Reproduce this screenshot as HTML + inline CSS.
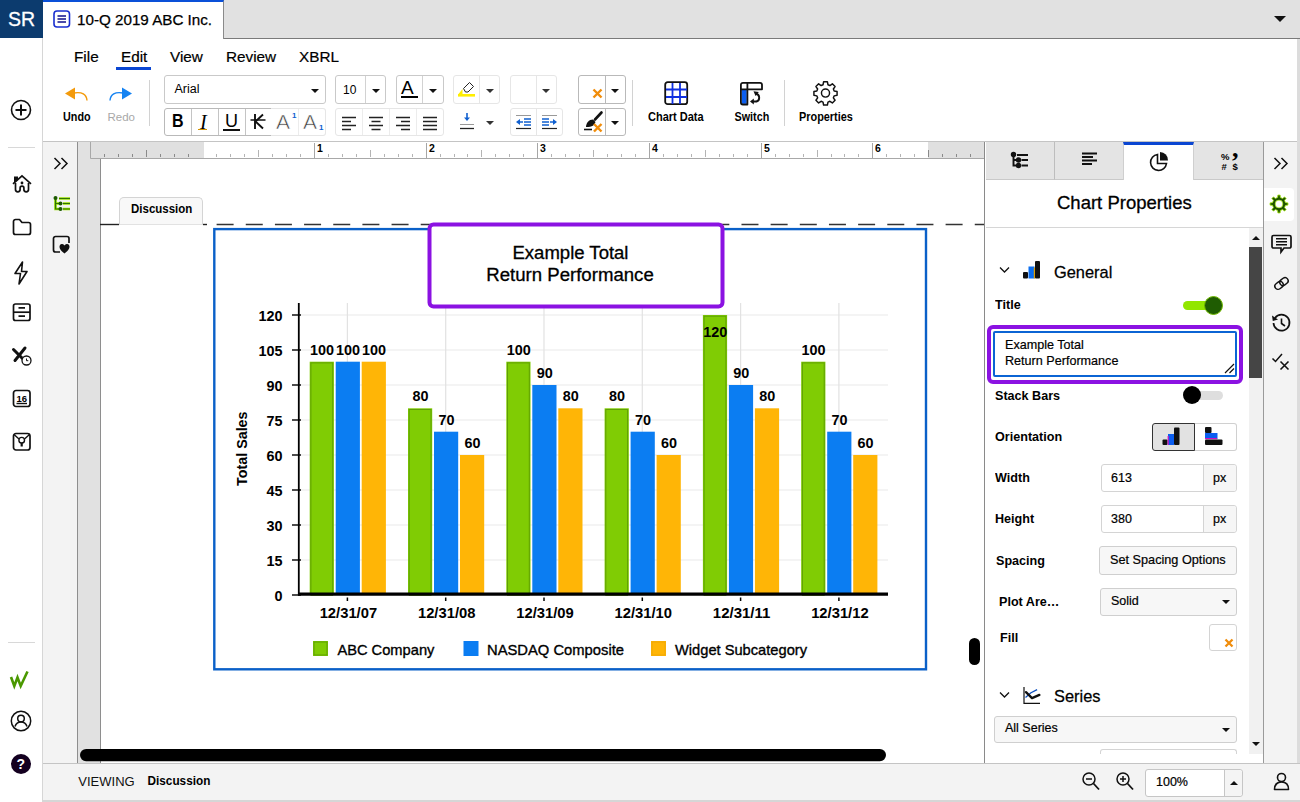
<!DOCTYPE html>
<html lang="en">
<head>
<meta charset="utf-8">
<title>10-Q 2019 ABC Inc.</title>
<style>
*{box-sizing:border-box;margin:0;padding:0}
html,body{width:1300px;height:802px;overflow:hidden;background:#fff}
body{font-family:"Liberation Sans",Arial,sans-serif;color:#000;position:relative;font-size:12px}
.abs{position:absolute}
.t{position:absolute;white-space:nowrap;line-height:1}
.b{font-weight:bold}
.sb{font-weight:normal;-webkit-text-stroke:0.45px currentColor}
svg{position:absolute;overflow:visible}
/* header */
#sr{left:0;top:0;width:43px;height:38.500px;background:#0c3b6e;color:#fff;font-size:19.500px;text-align:center;line-height:38px;-webkit-text-stroke:0.3px #fff}
#tabbar{left:43px;top:0;width:1257px;height:39px;background:#e1e1e1;border-bottom:1px solid #7a7a7a}
#tab{left:43px;top:0;width:181px;height:39px;background:#fff;border-top:2px solid #0a50d8;border-right:1px solid #8a8a8a}
#leftbar{left:0;top:38px;width:43px;height:764px;background:#fff;border-right:1px solid #d6d6d6}
#toolbar{left:43px;top:39px;width:1257px;height:103px;background:#fff;border-bottom:1px solid #c4c4c4}
.box{position:absolute;border:1px solid #c9c9c9;border-radius:3px;background:#fff}
.box.lt{border-color:#e6e6e6}
.box.dk{border-color:#b9b9b9}
.vs{position:absolute;width:1px;background:#d2d2d2}
.car{position:absolute;width:0;height:0;border-left:4px solid transparent;border-right:4px solid transparent;border-top:4px solid #111}
/* doc */
#panel2{left:43px;top:142px;width:34px;height:621px;background:#f3f3f3}
#gutter{left:77px;top:142px;width:23px;height:621px;background:#e1e1e1}
#page{left:100px;top:159px;width:885px;height:604px;background:#fff}
#ruler{left:90px;top:142px;width:895px;height:17px;background:#e0e0e0}
#rulerw{left:204px;top:142px;width:724px;height:16px;background:#fff}
/* right panel */
#rp{left:984px;top:142px;width:279px;height:621px;background:#fff;border-left:1px solid #8a8a8a}
#rbar{left:1263px;top:142px;width:37px;height:621px;background:#f3f3f3;border-left:1px solid #9a9a9a}
#redge{left:1297px;top:39px;width:3px;height:763px;background:#dcdcdc}
.rtab{position:absolute;top:142px;height:38px;background:#e4e4e4;border-right:1px solid #bdbdbd;border-bottom:1px solid #c9c9c9}
#status{left:43px;top:763px;width:1257px;height:39px;background:#f3f3f3;border-top:1px solid #c4c4c4;border-bottom:2px solid #d6d6d6}
.lbl{position:absolute;font-weight:bold;font-size:12.600px;white-space:nowrap;line-height:1;transform:scaleY(1.08);transform-origin:50% 55%}
</style>
</head>
<body>
<!-- HEADER -->
<div class="abs" id="tabbar"></div>
<div class="abs" id="sr">SR</div>
<div class="abs" id="tab"></div>
<div class="abs" id="leftbar"></div>
<div class="abs" id="toolbar"></div>
<!-- tab -->
<svg style="left:53px;top:10px" width="18" height="18" viewBox="0 0 18 18"><rect x="1" y="1" width="15.5" height="16" rx="3" fill="#fff" stroke="#1a2fd0" stroke-width="1.6"/><path d="M4.5 6h8.5M4.5 9h8.5M4.5 12h8.5" stroke="#10108c" stroke-width="1.5"/></svg>
<div class="t" style="left:77px;top:12px;font-size:15.200px;-webkit-text-stroke:0.25px #000">10-Q 2019 ABC Inc.</div>
<div class="car" style="left:1274px;top:15.500px;border-left-width:6px;border-right-width:6px;border-top-width:6px"></div>
<!-- menu -->
<div class="t" style="left:74px;top:48.500px;font-size:15.300px;-webkit-text-stroke:0.2px #000">File</div>
<div class="t" style="left:121px;top:48.500px;font-size:15.300px;-webkit-text-stroke:0.2px #000">Edit</div>
<div class="abs" style="left:116px;top:67px;width:35px;height:3px;background:#0a46d2"></div>
<div class="t" style="left:170px;top:48.500px;font-size:15.300px;-webkit-text-stroke:0.2px #000">View</div>
<div class="t" style="left:226px;top:48.500px;font-size:15.300px;-webkit-text-stroke:0.2px #000">Review</div>
<div class="t" style="left:299px;top:48.500px;font-size:15.300px;-webkit-text-stroke:0.2px #000">XBRL</div>
<!-- undo / redo -->
<svg style="left:64px;top:85px" width="26" height="18" viewBox="0 0 26 18"><path d="M1 8.500L11 2.500v12z" fill="#f39a0b"/><path d="M10 8c8-1.500 12.500 1.500 13 7.500" fill="none" stroke="#f39a0b" stroke-width="1.400"/></svg>
<svg style="left:108px;top:85px" width="26" height="18" viewBox="0 0 26 18"><path d="M24 8.500L14 2.500v12z" fill="#1583f2"/><path d="M15 8c-8-1.500-12.500 1.500-13 7.500" fill="none" stroke="#1583f2" stroke-width="1.400"/></svg>
<div class="t b" style="left:63px;top:112.200px;font-size:10.800px;transform:scaleY(1.1)">Undo</div>
<div class="t" style="left:107.500px;top:111.800px;font-size:11.500px;color:#a8a8a8">Redo</div>
<div class="vs" style="left:149px;top:80px;height:46px"></div>
<!-- font row 1 -->
<div class="box" style="left:164px;top:75px;width:162px;height:29px"></div>
<div class="t" style="left:174.500px;top:83px;font-size:12.500px">Arial</div>
<div class="car" style="left:311px;top:89px"></div>
<div class="box" style="left:335px;top:75px;width:51px;height:29px"></div>
<div class="vs" style="left:365px;top:76px;height:27px"></div>
<div class="t" style="left:343px;top:84px;font-size:12px">10</div>
<div class="car" style="left:372px;top:89px"></div>
<div class="box" style="left:396px;top:75px;width:48px;height:29px"></div>
<div class="vs" style="left:422px;top:76px;height:27px"></div>
<div class="t" style="left:401px;top:78px;font-size:19px">A</div>
<div class="abs" style="left:401px;top:96px;width:17px;height:2px;background:#000"></div>
<div class="car" style="left:429px;top:89px"></div>
<!-- highlight -->
<div class="box lt" style="left:453px;top:75px;width:47px;height:29px"></div>
<div class="vs" style="left:479px;top:76px;height:27px;background:#e6e6e6"></div>
<svg style="left:457px;top:79px" width="20" height="20" viewBox="0 0 20 20"><rect x="1" y="15" width="17" height="2.6" fill="#ffee00"/><path d="M1.5 15l4-5v5z" fill="#ffee00"/><path d="M6.5 9.5l6-6 4 4-5.5 5.5h-2.5z" fill="#fff" stroke="#222" stroke-width="1"/></svg>
<div class="car" style="left:486px;top:89px;border-top-color:#333"></div>
<div class="box lt" style="left:510px;top:75px;width:47px;height:29px"></div>
<div class="vs" style="left:536px;top:76px;height:27px;background:#e6e6e6"></div>
<div class="car" style="left:542px;top:89px;border-top-color:#333"></div>
<div class="box dk" style="left:578px;top:75px;width:48px;height:29px"></div>
<div class="vs" style="left:605px;top:76px;height:27px;background:#b9b9b9"></div>
<svg style="left:592px;top:88px" width="11" height="11" viewBox="0 0 11 11"><path d="M1.5 1.5l8 8M9.500 1.5l-8 8" stroke="#f08c0a" stroke-width="2.4"/></svg>
<div class="car" style="left:611px;top:89px"></div>
<!-- row 2 : B I U K A A -->
<div class="box dk" style="left:164px;top:108px;width:108px;height:28px;border-radius:3px 0 0 3px"></div>
<div class="box lt" style="left:271px;top:108px;width:55px;height:28px;border-radius:0 3px 3px 0;border-left:none"></div>
<div class="vs" style="left:191px;top:109px;height:26px;background:#c4c4c4"></div>
<div class="vs" style="left:218px;top:109px;height:26px;background:#c4c4c4"></div>
<div class="vs" style="left:245px;top:109px;height:26px;background:#c4c4c4"></div>
<div class="vs" style="left:298px;top:109px;height:26px;background:#ececec"></div>
<div class="t b" style="left:172px;top:113px;font-size:16px;transform:scaleY(1.2)">B</div>
<div class="t" style="left:200px;top:112px;font-size:20px;font-style:italic;font-family:'Liberation Serif',serif">I</div>
<div class="abs" style="left:198px;top:129px;width:9px;height:1px;background:#d09000"></div>
<div class="t" style="left:225px;top:112px;font-size:18px">U</div>
<div class="abs" style="left:223px;top:129px;width:17px;height:1.5px;background:#111"></div>
<svg style="left:249px;top:112px" width="18" height="18" viewBox="0 0 18 18"><path d="M6 2v15M14 2.500L6.500 9.500 14 16.500" fill="none" stroke="#111" stroke-width="1.9"/><path d="M1.500 8h15" stroke="#111" stroke-width="1.5"/></svg>
<div class="t" style="left:276px;top:111px;font-size:21px;color:#444;font-weight:100;-webkit-text-stroke:0.6px #fff">A</div>
<div class="t" style="left:292px;top:112px;font-size:8px;color:#1060d0;font-weight:bold">1</div>
<div class="t" style="left:303px;top:111px;font-size:21px;color:#444;-webkit-text-stroke:0.6px #fff">A</div>
<div class="t" style="left:319px;top:124px;font-size:8px;color:#1060d0;font-weight:bold">1</div>
<!-- align group -->
<div class="box lt" style="left:335px;top:108px;width:109px;height:28px"></div>
<div class="vs" style="left:362px;top:109px;height:26px;background:#ececec"></div>
<div class="vs" style="left:389px;top:109px;height:26px;background:#ececec"></div>
<div class="vs" style="left:416px;top:109px;height:26px;background:#ececec"></div>
<svg style="left:335px;top:108px" width="109" height="28" viewBox="0 0 109 28">
<g stroke="#222" stroke-width="1.3" fill="none">
<path d="M7 9.5h14M7 13.500h9M7 17.500h14M7 21.500h9"/>
<path d="M34 9.5h14M36.500 13.500h9M34 17.500h14M36.500 21.500h9"/>
<path d="M61 9.5h14M66 13.500h9M61 17.500h14M66 21.500h9"/>
<path d="M88 9.5h14M88 13.500h14M88 17.500h14M88 21.500h14"/>
</g></svg>
<!-- line spacing -->
<svg style="left:458px;top:112px" width="18" height="20" viewBox="0 0 18 20"><path d="M9 1v5" stroke="#1060d0" stroke-width="1.6"/><path d="M6 5.500h6L9 9z" fill="#1060d0"/><path d="M2 12.500h14" stroke="#999" stroke-width="1"/><path d="M2 16.500h14" stroke="#222" stroke-width="1.3"/></svg>
<div class="car" style="left:486px;top:121px;border-top-color:#333"></div>
<!-- indent -->
<div class="box lt" style="left:510px;top:108px;width:53px;height:28px"></div>
<div class="vs" style="left:536px;top:109px;height:26px;background:#e6e6e6"></div>
<svg style="left:514px;top:112px" width="20" height="20" viewBox="0 0 20 20"><path d="M2 3.500h15" stroke="#999" stroke-width="1"/><path d="M2 16.500h15" stroke="#222" stroke-width="1.2"/><path d="M10 7h7M10 10h7M10 13h7" stroke="#1060d0" stroke-width="1.5"/><path d="M2 10l4-3v6z" fill="#1060d0"/><path d="M5 10h4" stroke="#1060d0" stroke-width="1.5"/></svg>
<svg style="left:540px;top:112px" width="20" height="20" viewBox="0 0 20 20"><path d="M2 3.500h15" stroke="#999" stroke-width="1"/><path d="M2 16.500h15" stroke="#222" stroke-width="1.2"/><path d="M2 7h7M2 10h7M2 13h7" stroke="#1060d0" stroke-width="1.5"/><path d="M17 10l-4-3v6z" fill="#1060d0"/><path d="M10 10h4" stroke="#1060d0" stroke-width="1.5"/></svg>
<!-- brush x -->
<div class="box dk" style="left:578px;top:108px;width:48px;height:28px"></div>
<div class="vs" style="left:605px;top:109px;height:26px;background:#b9b9b9"></div>
<svg style="left:582px;top:110px" width="24" height="24" viewBox="0 0 24 24"><path d="M13 9.500L19.500 2.500" stroke="#111" stroke-width="2.6" stroke-linecap="round"/><path d="M4 17c0-4 3-7.500 7-7.500l2.500 2.500c-1 3-3 5-9.500 5z" fill="#111"/><path d="M2 19.500h8" stroke="#111" stroke-width="1.6"/><path d="M12 14l7.500 7.500M19.500 14L12 21.500" stroke="#f08c0a" stroke-width="2.4"/></svg>
<div class="car" style="left:611px;top:121px"></div>
<div class="vs" style="left:632px;top:80px;height:46px"></div>
<!-- chart data -->
<svg style="left:664px;top:81px" width="25" height="25" viewBox="0 0 25 25"><rect x="1.200" y="1.200" width="22" height="22" rx="2.500" fill="#fff" stroke="#111" stroke-width="1.8"/><path d="M8.500 2v21M16 2v21M2 8.500h21M2 16h21" stroke="#1030e0" stroke-width="1.8"/></svg>
<div class="t b" style="left:648px;top:112px;font-size:11px;transform:scaleY(1.1)">Chart Data</div>
<!-- switch -->
<svg style="left:739px;top:81px" width="26" height="25" viewBox="0 0 26 25"><rect x="2.700" y="8.800" width="5" height="14" fill="#0b5ef0"/><path d="M1.900 8.300V3.800a2 2 0 0 1 2-2H21a2 2 0 0 1 2 2v4.500H1.900V21.500a2 2 0 0 0 2 2H8.400V1.800" fill="none" stroke="#111" stroke-width="1.800" stroke-linejoin="round"/><path d="M17 12.800a4 4 0 0 1 .5 7.700h-3.500" fill="none" stroke="#111" stroke-width="1.900"/><path d="M11 20.500l3.800-2.900v5.800z" fill="#111"/><path d="M14.500 10.300l5.300 .8-3.200 3.900z" fill="#111"/></svg>
<div class="t b" style="left:734.500px;top:112px;font-size:10.800px;transform:scaleY(1.12)">Switch</div>
<div class="vs" style="left:784px;top:80px;height:46px"></div>
<!-- properties gear -->
<svg style="left:811.500px;top:79px" width="27" height="27" viewBox="0 0 24 24"><path d="M10.300 2.500h3.400l.5 2.600 1.700.7 2.200-1.500 2.400 2.400-1.500 2.200.7 1.700 2.600.5v3.400l-2.600.5-.7 1.700 1.500 2.200-2.400 2.400-2.200-1.500-1.700.7-.5 2.600h-3.400l-.5-2.600-1.700-.7-2.200 1.500-2.400-2.400 1.500-2.200-.7-1.700-2.600-.5v-3.400l2.600-.5.7-1.700-1.500-2.200 2.400-2.400 2.200 1.500 1.700-.7z" fill="none" stroke="#111" stroke-width="1.300" stroke-linejoin="round"/><circle cx="12" cy="12.500" r="3.600" fill="none" stroke="#111" stroke-width="1.300"/></svg>
<div class="t b" style="left:799px;top:112px;font-size:10.900px;transform:scaleY(1.1)">Properties</div>


<!-- DOC -->
<div class="abs" id="panel2"></div>
<div class="abs" id="gutter"></div>
<div class="abs" id="page"></div>
<div class="abs" id="ruler"></div>
<div class="abs" id="rulerw"></div>
<svg style="left:0;top:0" width="1300" height="802" viewBox="0 0 1300 802">
<path d="M104.5 157 v-3M118.5 157 v-3M132.5 157 v-3M146.5 157 v-7M160.5 157 v-3M174.5 157 v-3M188.5 157 v-3M928.5 157 v-7M942.5 157 v-3M956.5 157 v-3M970.5 157 v-3" stroke="#8a8a8a" stroke-width="1" fill="none"/>
<path d="M216.5 157 v-3M230.5 157 v-3M244.5 157 v-3M258.5 157 v-7M272.5 157 v-3M286.5 157 v-3M300.5 157 v-3M328.5 157 v-3M342.5 157 v-3M356.5 157 v-3M370.5 157 v-7M384.5 157 v-3M398.5 157 v-3M412.5 157 v-3M440.5 157 v-3M454.5 157 v-3M467.5 157 v-3M481.5 157 v-7M495.5 157 v-3M509.5 157 v-3M523.5 157 v-3M551.5 157 v-3M565.5 157 v-3M579.5 157 v-3M593.5 157 v-7M607.5 157 v-3M621.5 157 v-3M635.5 157 v-3M663.5 157 v-3M677.5 157 v-3M691.5 157 v-3M705.5 157 v-7M719.5 157 v-3M733.5 157 v-3M747.5 157 v-3M775.5 157 v-3M789.5 157 v-3M803.5 157 v-3M817.5 157 v-7M831.5 157 v-3M844.5 157 v-3M858.5 157 v-3M886.5 157 v-3M900.5 157 v-3M914.5 157 v-3" stroke="#b4b4b4" stroke-width="1" fill="none"/>
<path d="M314.5 143v15" stroke="#a6a6a6" stroke-width="1"/>
<text x="317.0" y="151.600" font-size="10.500" font-weight="bold" font-family="Liberation Sans,sans-serif">1</text>
<path d="M426.5 143v15" stroke="#a6a6a6" stroke-width="1"/>
<text x="429.0" y="151.600" font-size="10.500" font-weight="bold" font-family="Liberation Sans,sans-serif">2</text>
<path d="M537.5 143v15" stroke="#a6a6a6" stroke-width="1"/>
<text x="540.0" y="151.600" font-size="10.500" font-weight="bold" font-family="Liberation Sans,sans-serif">3</text>
<path d="M649.5 143v15" stroke="#a6a6a6" stroke-width="1"/>
<text x="652.0" y="151.600" font-size="10.500" font-weight="bold" font-family="Liberation Sans,sans-serif">4</text>
<path d="M761.5 143v15" stroke="#a6a6a6" stroke-width="1"/>
<text x="764.0" y="151.600" font-size="10.500" font-weight="bold" font-family="Liberation Sans,sans-serif">5</text>
<path d="M872.5 143v15" stroke="#a6a6a6" stroke-width="1"/>
<text x="875.0" y="151.600" font-size="10.500" font-weight="bold" font-family="Liberation Sans,sans-serif">6</text>
<path d="M90.5 142v16.500h894" stroke="#a8a8a8" stroke-width="1" fill="none"/>
<path d="M77.500 142V763M100.500 159V763" stroke="#8e8e8e" stroke-width="1" fill="none"/>
<path d="M100 224.500h19" stroke="#222" stroke-width="1.4"/>
<path d="M203 224.500h4" stroke="#222" stroke-width="1.4"/>
<path d="M216.600 224.500H985" stroke="#333" stroke-width="1.300" stroke-dasharray="17 12.16" fill="none"/>
<rect x="214.300" y="229.100" width="711.700" height="440.200" fill="#fff" stroke="#0a60c8" stroke-width="2.400"/>
<path d="M298.8 560.0H888" stroke="#eaeaea" stroke-width="1.2"/>
<path d="M298.8 525.0H888" stroke="#eaeaea" stroke-width="1.2"/>
<path d="M298.8 490.0H888" stroke="#eaeaea" stroke-width="1.2"/>
<path d="M298.8 455.0H888" stroke="#eaeaea" stroke-width="1.2"/>
<path d="M298.8 420.0H888" stroke="#eaeaea" stroke-width="1.2"/>
<path d="M298.8 385.0H888" stroke="#eaeaea" stroke-width="1.2"/>
<path d="M298.8 350.0H888" stroke="#eaeaea" stroke-width="1.2"/>
<path d="M298.8 315.0H888" stroke="#eaeaea" stroke-width="1.2"/>
<path d="M347.4 303V593" stroke="#e2e2e2" stroke-width="1.2"/>
<path d="M445.7 303V593" stroke="#e2e2e2" stroke-width="1.2"/>
<path d="M544.0 303V593" stroke="#e2e2e2" stroke-width="1.2"/>
<path d="M642.3 303V593" stroke="#e2e2e2" stroke-width="1.2"/>
<path d="M740.6 303V593" stroke="#e2e2e2" stroke-width="1.2"/>
<path d="M838.9 303V593" stroke="#e2e2e2" stroke-width="1.2"/>
<rect x="309.7" y="361.7" width="24.2" height="233.3" fill="#80cc04"/>
<rect x="310.9" y="362.9" width="21.8" height="232.3" fill="none" stroke="#5fa004" stroke-width="1"/>
<rect x="335.7" y="361.7" width="24.2" height="233.3" fill="#0b7df2"/>
<rect x="361.7" y="361.7" width="24.2" height="233.3" fill="#ffb506"/>
<rect x="408.0" y="408.3" width="24.2" height="186.7" fill="#80cc04"/>
<rect x="409.2" y="409.5" width="21.8" height="185.7" fill="none" stroke="#5fa004" stroke-width="1"/>
<rect x="434.0" y="431.7" width="24.2" height="163.3" fill="#0b7df2"/>
<rect x="460.0" y="455.0" width="24.2" height="140.0" fill="#ffb506"/>
<rect x="506.3" y="361.7" width="24.2" height="233.3" fill="#80cc04"/>
<rect x="507.5" y="362.9" width="21.8" height="232.3" fill="none" stroke="#5fa004" stroke-width="1"/>
<rect x="532.3" y="385.0" width="24.2" height="210.0" fill="#0b7df2"/>
<rect x="558.3" y="408.3" width="24.2" height="186.7" fill="#ffb506"/>
<rect x="604.6" y="408.3" width="24.2" height="186.7" fill="#80cc04"/>
<rect x="605.8" y="409.5" width="21.8" height="185.7" fill="none" stroke="#5fa004" stroke-width="1"/>
<rect x="630.6" y="431.7" width="24.2" height="163.3" fill="#0b7df2"/>
<rect x="656.6" y="455.0" width="24.2" height="140.0" fill="#ffb506"/>
<rect x="702.9" y="315.0" width="24.2" height="280.0" fill="#80cc04"/>
<rect x="704.1" y="316.2" width="21.8" height="279.0" fill="none" stroke="#5fa004" stroke-width="1"/>
<rect x="728.9" y="385.0" width="24.2" height="210.0" fill="#0b7df2"/>
<rect x="754.9" y="408.3" width="24.2" height="186.7" fill="#ffb506"/>
<rect x="801.2" y="361.7" width="24.2" height="233.3" fill="#80cc04"/>
<rect x="802.4" y="362.9" width="21.8" height="232.3" fill="none" stroke="#5fa004" stroke-width="1"/>
<rect x="827.2" y="431.7" width="24.2" height="163.3" fill="#0b7df2"/>
<rect x="853.2" y="455.0" width="24.2" height="140.0" fill="#ffb506"/>
<text x="322.1" y="354.7" text-anchor="middle" font-size="15" font-weight="bold" font-family="Liberation Sans,sans-serif" textLength="24" lengthAdjust="spacingAndGlyphs">100</text>
<text x="348.1" y="354.7" text-anchor="middle" font-size="15" font-weight="bold" font-family="Liberation Sans,sans-serif" textLength="24" lengthAdjust="spacingAndGlyphs">100</text>
<text x="374.1" y="354.7" text-anchor="middle" font-size="15" font-weight="bold" font-family="Liberation Sans,sans-serif" textLength="24" lengthAdjust="spacingAndGlyphs">100</text>
<text x="420.4" y="401.3" text-anchor="middle" font-size="15" font-weight="bold" font-family="Liberation Sans,sans-serif" textLength="16" lengthAdjust="spacingAndGlyphs">80</text>
<text x="446.4" y="424.7" text-anchor="middle" font-size="15" font-weight="bold" font-family="Liberation Sans,sans-serif" textLength="16" lengthAdjust="spacingAndGlyphs">70</text>
<text x="472.4" y="448.0" text-anchor="middle" font-size="15" font-weight="bold" font-family="Liberation Sans,sans-serif" textLength="16" lengthAdjust="spacingAndGlyphs">60</text>
<text x="518.7" y="354.7" text-anchor="middle" font-size="15" font-weight="bold" font-family="Liberation Sans,sans-serif" textLength="24" lengthAdjust="spacingAndGlyphs">100</text>
<text x="544.7" y="378.0" text-anchor="middle" font-size="15" font-weight="bold" font-family="Liberation Sans,sans-serif" textLength="16" lengthAdjust="spacingAndGlyphs">90</text>
<text x="570.7" y="401.3" text-anchor="middle" font-size="15" font-weight="bold" font-family="Liberation Sans,sans-serif" textLength="16" lengthAdjust="spacingAndGlyphs">80</text>
<text x="617.0" y="401.3" text-anchor="middle" font-size="15" font-weight="bold" font-family="Liberation Sans,sans-serif" textLength="16" lengthAdjust="spacingAndGlyphs">80</text>
<text x="643.0" y="424.7" text-anchor="middle" font-size="15" font-weight="bold" font-family="Liberation Sans,sans-serif" textLength="16" lengthAdjust="spacingAndGlyphs">70</text>
<text x="669.0" y="448.0" text-anchor="middle" font-size="15" font-weight="bold" font-family="Liberation Sans,sans-serif" textLength="16" lengthAdjust="spacingAndGlyphs">60</text>
<text x="715.3" y="337.0" text-anchor="middle" font-size="15" font-weight="bold" font-family="Liberation Sans,sans-serif" textLength="24" lengthAdjust="spacingAndGlyphs">120</text>
<text x="741.3" y="378.0" text-anchor="middle" font-size="15" font-weight="bold" font-family="Liberation Sans,sans-serif" textLength="16" lengthAdjust="spacingAndGlyphs">90</text>
<text x="767.3" y="401.3" text-anchor="middle" font-size="15" font-weight="bold" font-family="Liberation Sans,sans-serif" textLength="16" lengthAdjust="spacingAndGlyphs">80</text>
<text x="813.6" y="354.7" text-anchor="middle" font-size="15" font-weight="bold" font-family="Liberation Sans,sans-serif" textLength="24" lengthAdjust="spacingAndGlyphs">100</text>
<text x="839.6" y="424.7" text-anchor="middle" font-size="15" font-weight="bold" font-family="Liberation Sans,sans-serif" textLength="16" lengthAdjust="spacingAndGlyphs">70</text>
<text x="865.6" y="448.0" text-anchor="middle" font-size="15" font-weight="bold" font-family="Liberation Sans,sans-serif" textLength="16" lengthAdjust="spacingAndGlyphs">60</text>
<path d="M298.8 303V595.500" stroke="#000" stroke-width="1.8"/>
<path d="M298 594.200H888" stroke="#000" stroke-width="3.2"/>
<path d="M292 595.0h9" stroke="#000" stroke-width="1.4"/>
<text x="282.500" y="600.8" text-anchor="end" font-size="15" font-weight="bold" font-family="Liberation Sans,sans-serif" textLength="8" lengthAdjust="spacingAndGlyphs">0</text>
<path d="M292 560.0h9" stroke="#000" stroke-width="1.4"/>
<text x="282.500" y="565.8" text-anchor="end" font-size="15" font-weight="bold" font-family="Liberation Sans,sans-serif" textLength="16" lengthAdjust="spacingAndGlyphs">15</text>
<path d="M292 525.0h9" stroke="#000" stroke-width="1.4"/>
<text x="282.500" y="530.8" text-anchor="end" font-size="15" font-weight="bold" font-family="Liberation Sans,sans-serif" textLength="16" lengthAdjust="spacingAndGlyphs">30</text>
<path d="M292 490.0h9" stroke="#000" stroke-width="1.4"/>
<text x="282.500" y="495.8" text-anchor="end" font-size="15" font-weight="bold" font-family="Liberation Sans,sans-serif" textLength="16" lengthAdjust="spacingAndGlyphs">45</text>
<path d="M292 455.0h9" stroke="#000" stroke-width="1.4"/>
<text x="282.500" y="460.8" text-anchor="end" font-size="15" font-weight="bold" font-family="Liberation Sans,sans-serif" textLength="16" lengthAdjust="spacingAndGlyphs">60</text>
<path d="M292 420.0h9" stroke="#000" stroke-width="1.4"/>
<text x="282.500" y="425.8" text-anchor="end" font-size="15" font-weight="bold" font-family="Liberation Sans,sans-serif" textLength="16" lengthAdjust="spacingAndGlyphs">75</text>
<path d="M292 385.0h9" stroke="#000" stroke-width="1.4"/>
<text x="282.500" y="390.8" text-anchor="end" font-size="15" font-weight="bold" font-family="Liberation Sans,sans-serif" textLength="16" lengthAdjust="spacingAndGlyphs">90</text>
<path d="M292 350.0h9" stroke="#000" stroke-width="1.4"/>
<text x="282.500" y="355.8" text-anchor="end" font-size="15" font-weight="bold" font-family="Liberation Sans,sans-serif" textLength="24" lengthAdjust="spacingAndGlyphs">105</text>
<path d="M292 315.0h9" stroke="#000" stroke-width="1.4"/>
<text x="282.500" y="320.8" text-anchor="end" font-size="15" font-weight="bold" font-family="Liberation Sans,sans-serif" textLength="24" lengthAdjust="spacingAndGlyphs">120</text>
<path d="M347.4 597.500v3.500" stroke="#000" stroke-width="1.5"/>
<text x="348.4" y="617.600" text-anchor="middle" font-size="14.800" font-weight="bold" font-family="Liberation Sans,sans-serif" textLength="57.500" lengthAdjust="spacingAndGlyphs">12/31/07</text>
<path d="M445.7 597.500v3.500" stroke="#000" stroke-width="1.5"/>
<text x="446.7" y="617.600" text-anchor="middle" font-size="14.800" font-weight="bold" font-family="Liberation Sans,sans-serif" textLength="57.500" lengthAdjust="spacingAndGlyphs">12/31/08</text>
<path d="M544.0 597.500v3.500" stroke="#000" stroke-width="1.5"/>
<text x="545.0" y="617.600" text-anchor="middle" font-size="14.800" font-weight="bold" font-family="Liberation Sans,sans-serif" textLength="57.500" lengthAdjust="spacingAndGlyphs">12/31/09</text>
<path d="M642.3 597.500v3.500" stroke="#000" stroke-width="1.5"/>
<text x="643.3" y="617.600" text-anchor="middle" font-size="14.800" font-weight="bold" font-family="Liberation Sans,sans-serif" textLength="57.500" lengthAdjust="spacingAndGlyphs">12/31/10</text>
<path d="M740.6 597.500v3.500" stroke="#000" stroke-width="1.5"/>
<text x="741.6" y="617.600" text-anchor="middle" font-size="14.800" font-weight="bold" font-family="Liberation Sans,sans-serif" textLength="57.500" lengthAdjust="spacingAndGlyphs">12/31/11</text>
<path d="M838.9 597.500v3.500" stroke="#000" stroke-width="1.5"/>
<text x="839.9" y="617.600" text-anchor="middle" font-size="14.800" font-weight="bold" font-family="Liberation Sans,sans-serif" textLength="57.500" lengthAdjust="spacingAndGlyphs">12/31/12</text>
<text transform="translate(246.800 448.700) rotate(-90)" text-anchor="middle" font-size="14.300" font-weight="bold" font-family="Liberation Sans,sans-serif">Total Sales</text>
<rect x="313.0" y="641" width="15" height="15" fill="#80cc04"/>
<rect x="314.0" y="642" width="13" height="13" fill="none" stroke="#5fa004" stroke-width="1"/>
<text x="337.4" y="655" font-size="15" font-family="Liberation Sans,sans-serif" textLength="97" lengthAdjust="spacingAndGlyphs" stroke="#000" stroke-width="0.35">ABC Company</text>
<rect x="463.5" y="641" width="15" height="15" fill="#0b7df2"/>
<rect x="464.5" y="642" width="13" height="13" fill="none" stroke="#0b7df2" stroke-width="1"/>
<text x="487.0" y="655" font-size="15" font-family="Liberation Sans,sans-serif" textLength="137" lengthAdjust="spacingAndGlyphs" stroke="#000" stroke-width="0.35">NASDAQ Composite</text>
<rect x="651.0" y="641" width="15" height="15" fill="#ffb506"/>
<rect x="652.0" y="642" width="13" height="13" fill="none" stroke="#f0a806" stroke-width="1"/>
<text x="675.0" y="655" font-size="15" font-family="Liberation Sans,sans-serif" textLength="132" lengthAdjust="spacingAndGlyphs" stroke="#000" stroke-width="0.35">Widget Subcategory</text>
<rect x="429.500" y="224.500" width="293" height="82" rx="4" fill="#fff" stroke="#8b12e2" stroke-width="4"/>
<text x="570.500" y="259.300" text-anchor="middle" font-size="17.500" font-family="Liberation Sans,sans-serif" stroke="#000" stroke-width="0.3" textLength="116" lengthAdjust="spacingAndGlyphs">Example Total</text>
<text x="570" y="281" text-anchor="middle" font-size="17.500" font-family="Liberation Sans,sans-serif" stroke="#000" stroke-width="0.3" textLength="167.500" lengthAdjust="spacingAndGlyphs">Return Performance</text>
<rect x="80" y="749" width="806" height="12.200" rx="6.100" fill="#000"/>
<rect x="969" y="638" width="11" height="27" rx="5.500" fill="#000"/>
</svg>
<div class="abs" style="left:119px;top:197px;width:84px;height:28px;background:#f8f8f8;border:1px solid #d4d4d4;border-bottom:1px solid #e2e2e2;border-radius:5px 5px 0 0"></div>
<div class="t b" style="left:131px;top:204px;font-size:11.500px;transform:scaleY(1.08)">Discussion</div>
<svg style="left:52px;top:155px" width="18" height="18" viewBox="0 0 18 18"><path d="M2.500 3l5.500 5.500L2.500 14M9.500 3l5.500 5.500L9.500 14" fill="none" stroke="#111" stroke-width="1.5"/></svg>
<svg style="left:52px;top:195px" width="19" height="19" viewBox="0 0 19 19"><g stroke="#9be000" stroke-width="2.600" fill="none"><path d="M3.500 3v11h5M3.500 8.500h5M7 3.500h11M11 8.500h7M11 14h7"/></g><g stroke="#2f7400" stroke-width="1.200" fill="none"><path d="M3.500 3v11h5M3.500 8.500h5M7 3.500h11M11 8.500h7M11 14h7"/></g><circle cx="3.500" cy="3" r="2" fill="#1c5a00"/><circle cx="8.500" cy="8.500" r="2" fill="#1c5a00"/><circle cx="8.500" cy="14" r="2" fill="#1c5a00"/></svg>
<svg style="left:52px;top:235px" width="20" height="20" viewBox="0 0 20 20"><path d="M17 8V3.500a2 2 0 0 0-2-2H3.500a2 2 0 0 0-2 2V15a2 2 0 0 0 2 2H8" fill="none" stroke="#111" stroke-width="1.7"/><path d="M12.500 18.500C8 15 7.500 13 7.500 11.500a2.600 2.600 0 0 1 5-1 2.600 2.600 0 0 1 5 1c0 1.500-.5 3.500-5 7z" fill="#111"/></svg>

<!-- RIGHT PANEL -->
<div class="abs" id="rp"></div>
<div class="abs" id="rbar"></div>
<div class="abs" id="redge"></div>
<!-- right panel tabs -->
<div class="rtab" style="left:986px;width:69px"></div>
<div class="rtab" style="left:1055px;width:68px;border-right:none"></div>
<div class="rtab" style="left:1194px;width:69px;border-right:none"></div>
<div class="abs" style="left:1123px;top:142px;width:71px;height:38px;background:#fff;border-top:3px solid #0a46d2;border-left:1px solid #cfcfcf;border-right:1px solid #cfcfcf"></div>
<svg style="left:1010px;top:151px" width="20" height="20" viewBox="0 0 20 20"><g stroke="#111" stroke-width="1.900" fill="none"><path d="M3.500 3v11.500h5M3.500 9h5M7 4h11M11.500 9h6.500M11.500 14.500h6.500"/></g><circle cx="3.500" cy="3.500" r="2.700" fill="#111"/><circle cx="8.500" cy="9" r="2.700" fill="#111"/><circle cx="8.500" cy="14.500" r="2.700" fill="#111"/></svg>
<svg style="left:1081px;top:152px" width="18" height="18" viewBox="0 0 18 18"><path d="M1 1.600h15M1 5h11M1 8.500h15M1 12h10" stroke="#111" stroke-width="2"/></svg>
<svg style="left:1148px;top:150px" width="22" height="22" viewBox="0 0 22 22"><path d="M9.500 4.500A8 8 0 1 0 18.500 13.500H9.500z" fill="none" stroke="#111" stroke-width="1.600"/><path d="M12 2a8 8 0 0 1 8 8.500h-8z" fill="#111"/></svg>
<div class="t b" style="left:1221px;top:151.500px;font-size:9.500px">%</div><div class="t b" style="left:1232px;top:136px;font-size:26px;font-family:'Liberation Serif',serif">,</div><div class="t b" style="left:1221.500px;top:161.500px;font-size:9.500px">#</div><div class="t b" style="left:1232.500px;top:161.500px;font-size:9.500px">$</div>
<div class="t" style="left:1057px;top:194px;font-size:18.500px;-webkit-text-stroke:0.3px #000">Chart Properties</div>
<div class="abs" style="left:986px;top:227px;width:277px;height:1px;background:#d6d6d6"></div>
<!-- scrollbar -->
<div class="abs" style="left:1249px;top:228px;width:14px;height:526px;background:#f1f1f1"></div>
<div class="abs" style="left:1249px;top:247px;width:13px;height:131px;background:#454545"></div>
<div class="car" style="left:1252px;top:236px;border-top:none;border-bottom:4px solid #111"></div>
<div class="car" style="left:1252px;top:742px"></div>
<!-- General -->
<svg style="left:999px;top:266px" width="11" height="8" viewBox="0 0 11 8"><path d="M1 1.500l4.500 4.500L10 1.500" fill="none" stroke="#111" stroke-width="1.300"/></svg>
<svg style="left:1023px;top:261px" width="18" height="18" viewBox="0 0 18 18"><rect x="0" y="11" width="5" height="6.500" rx="1" fill="#111"/><rect x="5.500" y="5.500" width="6" height="12" fill="#0b6ef0"/><rect x="10.800" y="6.500" width="1.400" height="11" fill="#e0a000"/><rect x="12" y="0" width="5" height="17.500" rx="1" fill="#111"/></svg>
<div class="t" style="left:1054px;top:263.500px;font-size:16.400px;transform:scaleY(1.05);-webkit-text-stroke:0.25px #000">General</div>
<div class="lbl" style="left:995px;top:299px">Title</div>
<div class="abs" style="left:1183px;top:301px;width:30px;height:9px;border-radius:5px;background:#92e600"></div>
<div class="abs" style="left:1203.500px;top:295.500px;width:19px;height:19px;border-radius:10px;background:#1f5c02;border:1px solid #6fb800"></div>
<div class="abs" style="left:987px;top:325px;width:256px;height:59px;border:4.500px solid #8b12e2;border-radius:6px;background:#fff"></div>
<div class="abs" style="left:993px;top:331px;width:244px;height:46px;border:2px solid #0b64d4;border-radius:2px;background:#fff"></div>
<div class="t" style="left:1005px;top:338px;font-size:12.600px;line-height:15.500px;white-space:pre;-webkit-text-stroke:0.2px #000">Example Total
Return Performance</div>
<svg style="left:1224px;top:363px" width="11" height="11" viewBox="0 0 11 11"><path d="M1 10L10 1M5.500 10L10 5.500" stroke="#111" stroke-width="1.200"/></svg>
<div class="lbl" style="left:995px;top:390px">Stack Bars</div>
<div class="abs" style="left:1195px;top:391px;width:28px;height:9px;border-radius:5px;background:#dedede"></div>
<div class="abs" style="left:1183px;top:386px;width:18px;height:18px;border-radius:9px;background:#000"></div>
<div class="lbl" style="left:995px;top:431px">Orientation</div>
<div class="abs" style="left:1194px;top:423px;width:43px;height:28px;border:1px solid #d0d0d0;border-left:none;border-radius:0 3px 3px 0;background:#fff"></div>
<div class="abs" style="left:1152px;top:423px;width:43px;height:28px;border:1px solid #333;border-radius:3px 0 0 3px;background:#e2e2e2"></div>
<svg style="left:1162px;top:427px" width="20" height="19" viewBox="0 0 20 19"><rect x="0.500" y="12.500" width="5" height="5.500" rx="1" fill="#111"/><rect x="6" y="7" width="6" height="11" fill="#0b5ef0"/><rect x="5.600" y="9" width="1.200" height="9" fill="#d010c0"/><rect x="12" y="0.500" width="5.500" height="17.500" rx="1" fill="#111"/></svg>
<svg style="left:1204px;top:427px" width="20" height="19" viewBox="0 0 20 19"><rect x="1" y="0" width="6.500" height="6" rx="1" fill="#111"/><rect x="1" y="6" width="12.500" height="6" fill="#0b5ef0"/><rect x="1" y="11" width="12" height="1.200" fill="#d010c0"/><rect x="1" y="12.500" width="17.500" height="5.500" rx="1" fill="#111"/></svg>
<div class="lbl" style="left:995px;top:472px">Width</div>
<div class="box" style="left:1101px;top:464px;width:136px;height:28px;border-color:#d4d4d4"></div>
<div class="abs" style="left:1203px;top:465px;width:33px;height:26px;background:#f6f6f6;border-left:1px solid #d4d4d4;border-radius:0 3px 3px 0"></div>
<div class="t" style="left:1111px;top:472px;font-size:12.500px;-webkit-text-stroke:0.2px #000">613</div>
<div class="t" style="left:1213px;top:472px;font-size:12.500px;-webkit-text-stroke:0.2px #000">px</div>
<div class="lbl" style="left:995px;top:513px">Height</div>
<div class="box" style="left:1101px;top:505px;width:136px;height:28px;border-color:#d4d4d4"></div>
<div class="abs" style="left:1203px;top:506px;width:33px;height:26px;background:#f6f6f6;border-left:1px solid #d4d4d4;border-radius:0 3px 3px 0"></div>
<div class="t" style="left:1111px;top:513px;font-size:12.500px;-webkit-text-stroke:0.2px #000">380</div>
<div class="t" style="left:1213px;top:513px;font-size:12.500px;-webkit-text-stroke:0.2px #000">px</div>
<div class="lbl" style="left:996px;top:555px">Spacing</div>
<div class="box" style="left:1099px;top:546px;width:138px;height:29px;background:#f7f7f7;border-color:#cfcfcf"></div>
<div class="t" style="left:1110px;top:554px;font-size:12.700px;-webkit-text-stroke:0.2px #000">Set Spacing Options</div>
<div class="lbl" style="left:999px;top:596px">Plot Are…</div>
<div class="box" style="left:1100px;top:588px;width:137px;height:28px;background:#f7f7f7;border-color:#cfcfcf"></div>
<div class="t" style="left:1111px;top:595px;font-size:12.500px;-webkit-text-stroke:0.2px #000">Solid</div>
<div class="car" style="left:1222px;top:600px;border-left-width:4.500px;border-right-width:4.500px"></div>
<div class="lbl" style="left:1000px;top:632px">Fill</div>
<div class="box" style="left:1209px;top:624px;width:28px;height:27px;border-color:#d4d4d4"></div>
<svg style="left:1224px;top:638px" width="10" height="10" viewBox="0 0 10 10"><path d="M1.500 1.500l7 7M8.500 1.500l-7 7" stroke="#f08c0a" stroke-width="2.300"/></svg>
<!-- Series -->
<svg style="left:999px;top:691px" width="11" height="8" viewBox="0 0 11 8"><path d="M1 1.500l4.500 4.500L10 1.500" fill="none" stroke="#111" stroke-width="1.300"/></svg>
<svg style="left:1022px;top:686px" width="19" height="19" viewBox="0 0 19 19"><path d="M2 1V17.300H18" fill="none" stroke="#111" stroke-width="1.200"/><path d="M3.500 11.600L8.600 7l6.500-3.400" fill="none" stroke="#0b4ec0" stroke-width="1.300"/><path d="M4 6.100l6 6 7.400-3.200" fill="none" stroke="#111" stroke-width="2.300" stroke-linejoin="round" stroke-linecap="round"/></svg>
<div class="t" style="left:1054px;top:688px;font-size:16.400px;transform:scaleY(1.05);-webkit-text-stroke:0.25px #000">Series</div>
<div class="box" style="left:994px;top:716px;width:243px;height:27px;background:#f7f7f7;border-color:#cfcfcf"></div>
<div class="t" style="left:1005px;top:722px;font-size:12.500px;-webkit-text-stroke:0.2px #000">All Series</div>
<div class="car" style="left:1222px;top:728px;border-left-width:4.500px;border-right-width:4.500px"></div>
<div class="abs" style="left:1100px;top:749px;width:137px;height:5px;border:1px solid #d4d4d4;border-bottom:none;border-radius:3px 3px 0 0"></div>
<!-- right sidebar -->
<div class="abs" style="left:1264px;top:188px;width:30px;height:33px;background:#fff;border-radius:0 4px 4px 0"></div>
<svg style="left:1272px;top:155px" width="18" height="18" viewBox="0 0 18 18"><path d="M2.500 3l5.500 5.500L2.500 14M9.500 3l5.500 5.500L9.500 14" fill="none" stroke="#111" stroke-width="1.500"/></svg>
<svg style="left:1269.300px;top:194.200px" width="20" height="20" viewBox="0 0 20 20"><path d="M8.65 3.54L8.89 1.07L11.11 1.07L11.35 3.54L13.61 4.48L15.53 2.90L17.10 4.47L15.52 6.39L16.46 8.65L18.93 8.89L18.93 11.11L16.46 11.35L15.52 13.61L17.10 15.53L15.53 17.10L13.61 15.52L11.35 16.46L11.11 18.93L8.89 18.93L8.65 16.46L6.39 15.52L4.47 17.10L2.90 15.53L4.48 13.61L3.54 11.35L1.07 11.11L1.07 8.89L3.54 8.65L4.48 6.39L2.90 4.47L4.47 2.90L6.39 4.48Z" fill="#1d5200" stroke="#9be000" stroke-width="0.8" stroke-linejoin="round"/><circle cx="10" cy="10" r="3.900" fill="#fff" stroke="#9be000" stroke-width="0.700"/></svg>
<svg style="left:1271px;top:234px" width="21" height="20" viewBox="0 0 21 20"><path d="M2.500 1.500h16a1.500 1.500 0 0 1 1.500 1.500v9.500a1.500 1.500 0 0 1-1.500 1.500H13l-3 4v-4H2.500A1.500 1.500 0 0 1 1 12.500V3a1.500 1.500 0 0 1 1.500-1.500z" fill="none" stroke="#111" stroke-width="1.700"/><path d="M5 4.800h11M5 7.800h11M5 10.800h11" stroke="#111" stroke-width="1.500"/></svg>
<svg style="left:1273px;top:275px" width="17" height="17" viewBox="0 0 19 19"><g transform="rotate(-38 9.500 9.500)" fill="none" stroke="#111" stroke-width="1.600"><rect x="1" y="6" width="10" height="7" rx="3.500"/><rect x="8" y="6" width="10" height="7" rx="3.500"/></g></svg>
<svg style="left:1271px;top:313px" width="20" height="20" viewBox="0 0 20 20"><path d="M4 5A8 8 0 1 1 2.500 10" fill="none" stroke="#111" stroke-width="1.700"/><path d="M1 2.500l.8 5.500 5.200-1.500z" fill="#111"/><path d="M10.500 5.500v5l3.500 2.500" fill="none" stroke="#111" stroke-width="1.600"/></svg>
<svg style="left:1271px;top:352px" width="20" height="20" viewBox="0 0 20 20"><path d="M1.500 6.500l3 3L11 2" fill="none" stroke="#111" stroke-width="1.500"/><path d="M9.500 9.500l8 8M17.500 9.500l-8 8" stroke="#111" stroke-width="1.600"/></svg>

<!-- STATUS -->
<div class="abs" id="status"></div>
<!-- status -->
<div class="t" style="left:78.300px;top:775px;font-size:13px;color:#111">VIEWING</div>
<div class="t b" style="left:147.500px;top:775.500px;font-size:11.800px;transform:scaleY(1.08)">Discussion</div>
<svg style="left:1081px;top:771px" width="20" height="20" viewBox="0 0 20 20"><circle cx="8" cy="8" r="6" fill="none" stroke="#111" stroke-width="1.500"/><path d="M12.500 12.500L18 18.500" stroke="#111" stroke-width="1.800"/><path d="M5 8h6" stroke="#111" stroke-width="1.500"/></svg>
<svg style="left:1115px;top:771px" width="20" height="20" viewBox="0 0 20 20"><circle cx="8" cy="8" r="6" fill="none" stroke="#111" stroke-width="1.500"/><path d="M12.500 12.500L18 18.500" stroke="#111" stroke-width="1.800"/><path d="M5 8h6M8 5v6" stroke="#111" stroke-width="1.500"/></svg>
<div class="box" style="left:1145px;top:769px;width:98px;height:28px;border-color:#c6c6c6"></div>
<div class="abs" style="left:1224px;top:770px;width:18px;height:26px;background:#f4f4f4;border-left:1px solid #c6c6c6;border-radius:0 3px 3px 0"></div>
<div class="t" style="left:1156px;top:776px;font-size:12.500px;-webkit-text-stroke:0.2px #000">100%</div>
<div class="car" style="left:1230px;top:781px;border-top:none;border-bottom:4px solid #111"></div>
<svg style="left:1273px;top:772px" width="17" height="19" viewBox="0 0 17 19"><circle cx="8.500" cy="5.500" r="4" fill="none" stroke="#111" stroke-width="1.600"/><path d="M1.500 17.500c0-5 3-7.500 7-7.500s7 2.500 7 7.500z" fill="none" stroke="#111" stroke-width="1.600" stroke-linejoin="round"/></svg>
<!-- left sidebar -->
<svg style="left:10px;top:99px" width="22" height="22" viewBox="0 0 22 22"><circle cx="11" cy="11" r="9.500" fill="none" stroke="#111" stroke-width="1.600"/><path d="M5.500 11h11M11 5.500v11" stroke="#111" stroke-width="2"/></svg>
<div class="abs" style="left:8px;top:147px;width:27px;height:1px;background:#d8d8d8"></div>
<svg style="left:12px;top:174px" width="20" height="20" viewBox="0 0 20 20"><path d="M1 9.800L10 1.800l9 8" fill="none" stroke="#111" stroke-width="1.700"/><path d="M2 2.500h4v3.500L2 9z" fill="#111"/><path d="M3.500 9v6.500a2.300 2.300 0 0 0 4.600 0v-1.500a1.900 1.900 0 0 1 3.800 0v1.500a2.300 2.300 0 0 0 4.600 0V9" fill="none" stroke="#111" stroke-width="1.700"/><circle cx="10" cy="9" r="1.400" fill="#111"/></svg>
<svg style="left:12px;top:218px" width="20" height="18" viewBox="0 0 20 18"><path d="M1.500 3.500a2 2 0 0 1 2-2h4l2.500 3h6.500a2 2 0 0 1 2 2v8a2 2 0 0 1-2 2h-13a2 2 0 0 1-2-2z" fill="none" stroke="#111" stroke-width="1.700" stroke-linejoin="round"/></svg>
<svg style="left:12px;top:260px" width="18" height="26" viewBox="0 0 18 26"><path d="M10.500 2L3 13.500h5.500L7 24 15 11.500H9.500z" fill="none" stroke="#111" stroke-width="1.600" stroke-linejoin="round"/></svg>
<svg style="left:12px;top:303px" width="20" height="19" viewBox="0 0 20 19"><rect x="1.500" y="1" width="16.500" height="16.500" rx="2" fill="none" stroke="#111" stroke-width="1.700"/><path d="M1.500 9.200h16.500" stroke="#111" stroke-width="1.700"/><path d="M6.500 4.800h6.500M6.500 13.200h6.500" stroke="#111" stroke-width="1.800"/></svg>
<svg style="left:12px;top:346px" width="21" height="21" viewBox="0 0 21 21"><path d="M1.500 3.500L13 15M13 2L3 14.500" stroke="#111" stroke-width="3" stroke-linecap="round"/><circle cx="14.500" cy="14.500" r="4.500" fill="#fff" stroke="#111" stroke-width="1.300"/><path d="M14.500 12.500v2.200h1.800" stroke="#111" stroke-width="1" fill="none"/></svg>
<svg style="left:12px;top:389px" width="20" height="19" viewBox="0 0 20 19"><rect x="1.500" y="1.500" width="16.500" height="16" rx="2.500" fill="none" stroke="#111" stroke-width="1.700"/><path d="M4.500 14.500h10.500" stroke="#111" stroke-width="1.400"/><text x="9.700" y="12.500" text-anchor="middle" font-size="9.500" font-weight="bold" font-family="Liberation Sans,sans-serif">16</text></svg>
<svg style="left:12px;top:432px" width="20" height="20" viewBox="0 0 20 20"><rect x="1.500" y="1.500" width="16.500" height="16.500" rx="2.500" fill="none" stroke="#111" stroke-width="1.700"/><path d="M2 2.500l5 4.500M17.500 2.500l-5 4.500" stroke="#111" stroke-width="1.400"/><circle cx="9.700" cy="8.200" r="2.800" fill="none" stroke="#111" stroke-width="1.400"/><path d="M9.700 11v3.500" stroke="#111" stroke-width="2.200"/></svg>
<div class="abs" style="left:8px;top:642px;width:27px;height:1px;background:#d8d8d8"></div>
<svg style="left:10px;top:670px" width="19" height="18" viewBox="0 0 19 18"><path d="M1 7l3.300 9 3.200-8.500 3.200 8.500L17.500 1.500" fill="none" stroke="#4a9800" stroke-width="2.600" stroke-linejoin="miter"/></svg>
<svg style="left:10px;top:710px" width="22" height="22" viewBox="0 0 22 22"><circle cx="11" cy="11" r="9.700" fill="none" stroke="#111" stroke-width="1.500"/><circle cx="11" cy="8.500" r="3.300" fill="none" stroke="#111" stroke-width="1.500"/><path d="M5 16.500c1-3 3.500-4.500 6-4.500s5 1.500 6 4.500" fill="none" stroke="#111" stroke-width="1.500"/></svg>
<div class="abs" style="left:11px;top:754px;width:20px;height:20px;border-radius:10px;background:#140020"></div>
<div class="t b" style="left:16.500px;top:757px;font-size:14px;color:#fff">?</div>

<!-- LEFTBAR -->

</body>
</html>
